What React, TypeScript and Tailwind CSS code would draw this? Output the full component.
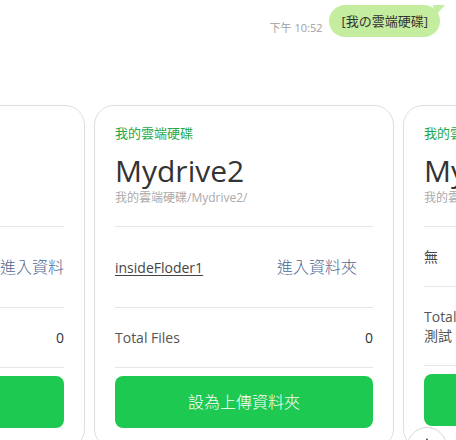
import React from "react";
import { Plus } from "lucide-react";

type Drive = {
  label: string;
  name: string;
  path: string;
  folder: string | null;
  total: string[];
  count: string;
  wide?: boolean;
};

const drives: Drive[] = [
  {
    label: "我的雲端硬碟",
    name: "Mydrive1",
    path: "我的雲端硬碟/Mydrive1/",
    folder: "insideFloder_backup_folder",
    total: ["Total Files"],
    count: "0",
    wide: true,
  },
  {
    label: "我的雲端硬碟",
    name: "Mydrive2",
    path: "我的雲端硬碟/Mydrive2/",
    folder: "insideFloder1",
    total: ["Total Files"],
    count: "0",
  },
  {
    label: "我的雲端硬碟",
    name: "Mydrive3",
    path: "我的雲端硬碟/Mydrive3/",
    folder: null,
    total: ["Total Files", "測試"],
    count: "0",
  },
];

const font = "font-['Open_Sans','Noto_Sans_CJK_TC',sans-serif]";

const DriveCard: React.FC<{ drive: Drive }> = ({ drive }) => {
  return (
    <div className="w-[300px] shrink-0 rounded-[20px] border border-[#dedede] bg-white px-5 pt-[19px] pb-5">
      <div className="text-[13px] leading-[16px] text-[#1ea84a]">{drive.label}</div>
      <div className="mt-[10px] text-[30px] leading-[40px] font-normal text-[#333]">{drive.name}</div>
      <div className="text-[12px] leading-[14px] text-[#aaa]">{drive.path}</div>
      <div className="mt-[21px] border-t border-[#e6e6e6]">
        {drive.folder ? (
          <div className="flex items-center justify-between overflow-hidden py-5">
            <span
              className={
                drive.wide
                  ? "w-[178px] shrink-0 truncate text-[14px] text-[#444] underline underline-offset-2"
                  : "text-[14px] text-[#444] underline underline-offset-2"
              }
            >
              {drive.folder}
            </span>
            <button className="shrink-0 px-4 py-2 text-[16px] leading-[24px] font-light text-[#4e6892]">進入資料夾</button>
          </div>
        ) : (
          <div className="py-5 text-[14px] leading-[19px] text-[#444]">無</div>
        )}
      </div>
      <div className="flex items-center justify-between border-t border-[#e6e6e6] py-5">
        <div className="text-[14px] leading-[19px] text-[#555]">
          {drive.total.map((t) => (
            <div key={t}>{t}</div>
          ))}
        </div>
        <span className="text-[14px] leading-[19px] text-[#333]">{drive.count}</span>
      </div>
      <div className="border-t border-[#e6e6e6] pt-2">
        <button className="h-[52px] w-full rounded-lg bg-[#1ec951] text-[16px] font-light text-white">設為上傳資料夾</button>
      </div>
    </div>
  );
};

export default function App() {
  return (
    <div className={`relative h-[440px] w-[456px] overflow-hidden bg-white ${font}`}>
      <div className="flex items-end justify-end gap-[7px] pt-[5px] pr-4">
        <span className="mb-[1px] text-[11px] text-[#a0a0a0]">下午 10:52</span>
        <div className="relative rounded-[16px] bg-[#c5ed9f] px-[12px] py-[6px] text-[13px] leading-[20px] text-[#333]">
          [我の雲端硬碟]
          <svg className="absolute -right-[5px] top-0" width="12" height="12" viewBox="0 0 12 12">
            <path d="M0 0 L12 0 Q6 6 2 12 Z" fill="#c5ed9f" />
          </svg>
        </div>
      </div>
      <div className="mt-[68px] flex gap-[9px] -ml-[215px]">
        {drives.map((d) => (
          <DriveCard key={d.name} drive={d} />
        ))}
      </div>
      <button className="absolute left-[407px] top-[427px] flex h-[40px] w-[40px] items-center justify-center rounded-full border border-[#d6d6d6] bg-white text-[#333]">
        <Plus size={26} strokeWidth={1.5} />
      </button>
    </div>
  );
}
